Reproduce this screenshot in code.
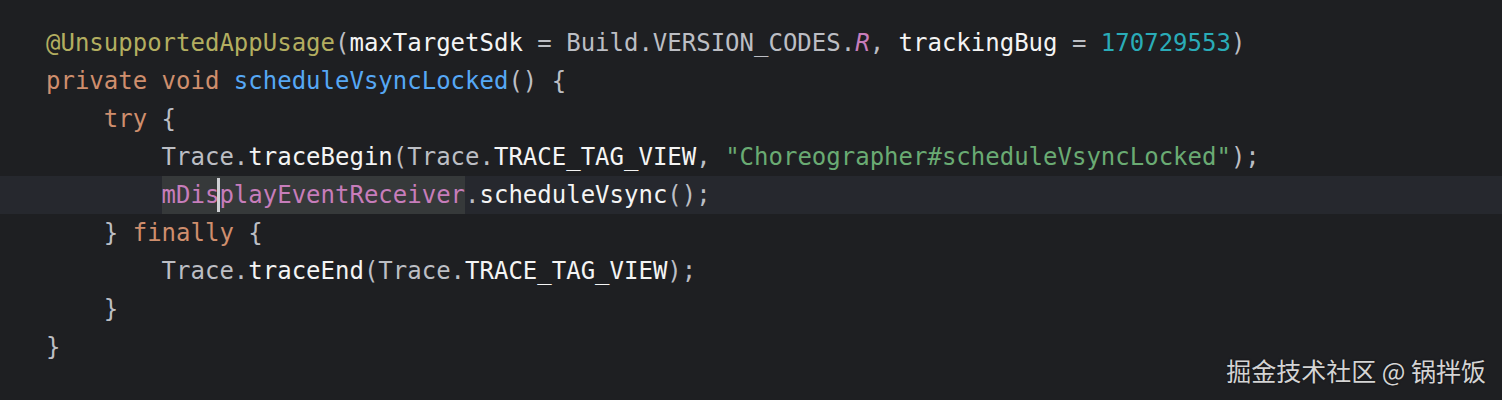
type Tok = [string, string];

const C = {
  ann: "text-[#b3ae60]",
  kw: "text-[#cf8e6d]",
  fn: "text-[#56a8f5]",
  str: "text-[#6aab73]",
  num: "text-[#2aacb8]",
  field: "text-[#c77dbb]",
  txt: "text-[#bcbec4]",
  hi: "text-[#f4f4f4]",
};

const lines: Tok[][] = [
  [
    ["@UnsupportedAppUsage", C.ann],
    ["(", C.txt],
    ["maxTargetSdk", C.hi],
    [" = Build.VERSION_CODES.", C.txt],
    ["R", C.field + " italic"],
    [", ", C.txt],
    ["trackingBug", C.hi],
    [" = ", C.txt],
    ["170729553", C.num],
    [")", C.txt],
  ],
  [
    ["private void ", C.kw],
    ["scheduleVsyncLocked", C.fn],
    ["() {", C.txt],
  ],
  [
    ["    try ", C.kw],
    ["{", C.txt],
  ],
  [
    ["        Trace.", C.txt],
    ["traceBegin", C.hi],
    ["(Trace.", C.txt],
    ["TRACE_TAG_VIEW", C.hi],
    [", ", C.txt],
    ['"Choreographer#scheduleVsyncLocked"', C.str],
    [");", C.txt],
  ],
  [],
  [
    ["    } ", C.txt],
    ["finally ", C.kw],
    ["{", C.txt],
  ],
  [
    ["        Trace.", C.txt],
    ["traceEnd", C.hi],
    ["(Trace.", C.txt],
    ["TRACE_TAG_VIEW", C.hi],
    [");", C.txt],
  ],
  [["    }", C.txt]],
  [["}", C.txt]],
];

function CurrentLine() {
  return (
    <div className="h-[38px] leading-[38px] whitespace-pre bg-[#26282e] pl-[46px] -ml-[46px] w-[1502px]">
      <span className={C.txt}>{"        "}</span>
      <span className={`${C.field} bg-[#36393a] relative inline-block`}>
        mDisplayEventReceiver
        {/* caret */}
        <span className="absolute left-[55px] top-[2px] h-[34px] w-[3px] bg-[#cfd0d4]" />
      </span>
      <span className={C.txt}>.</span>
      <span className={C.hi}>scheduleVsync</span>
      <span className={C.txt}>();</span>
    </div>
  );
}

export default function App() {
  return (
    <div className="relative w-[1502px] h-[400px] overflow-hidden bg-[#1e1f22]">
      <div
        className="pt-[24px] pl-[46px] text-[24px]"
        style={{ fontFamily: '"DejaVu Sans Mono", "Liberation Mono", monospace' }}
      >
        {lines.map((line, i) =>
          i === 4 ? (
            <CurrentLine key={i} />
          ) : (
            <div key={i} className="h-[38px] leading-[38px] whitespace-pre">
              {line.map(([t, c], j) => (
                <span key={j} className={c}>
                  {t}
                </span>
              ))}
            </div>
          )
        )}
      </div>
      <div
        className="absolute right-[16px] bottom-[17px] text-[25px] leading-none text-[#d4d4d4] whitespace-pre [text-shadow:0_0_2px_rgba(0,0,0,0.6)]"
        style={{ fontFamily: '"Noto Sans CJK SC", "Noto Sans", sans-serif' }}
      >
        掘金技术社区 @ 锅拌饭
      </div>
    </div>
  );
}
